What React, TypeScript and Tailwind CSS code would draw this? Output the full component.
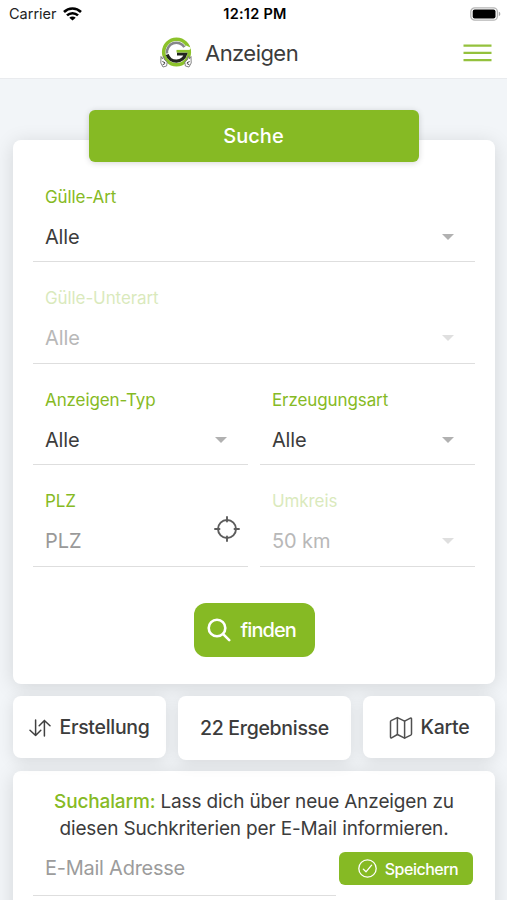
import clsx from "clsx";
import type { ReactNode } from "react";

const Logo = () => (
  <svg width="34" height="34" viewBox="0 0 34 34" fill="none">
    <circle cx="17.5" cy="16" r="12.8" stroke="#8cc22b" strokeWidth="3.6" />
    <path d="M27 9.5l5 2.2-2 3h-5z" fill="#fff" />
    <path d="M8 17.5a9.5 9.5 0 0 1 17.4-6.4" stroke="#85878a" strokeWidth="2.6" />
    <path d="M8.2 18.5A9.6 9.6 0 0 0 26.6 18H18" stroke="#23261f" strokeWidth="3.2" />
    <path d="M17.5 15.2h14.3" stroke="#8cc22b" strokeWidth="2.6" />
    <g stroke="#777" strokeWidth="0.9" fill="#fff">
      <path d="M2 20.5l1.6 2.5 1-2.6 1.2 3.6 2.4 2-.6 4-3.6 1-2.2-4z" />
      <path d="M32 20.5l-1.6 2.5-1-2.6-1.2 3.6-2.4 2 .6 4 3.6 1 2.2-4z" />
    </g>
    <path d="M3.4 25.5l2.6 1.2M3.6 28.8l2.6-1.4M30.6 25.5L28 26.7M30.4 28.8l-2.6-1.4" stroke="#444" strokeWidth="1" />
  </svg>
);

const WifiIcon = () => (
  <svg width="19" height="14" viewBox="0 0 19 14" fill="none" stroke="#000" strokeWidth="2.6">
    <path d="M1 5a12.2 12.2 0 0 1 17 0" />
    <path d="M4 8.4a8 8 0 0 1 11 0" />
    <path d="M9.5 13.6L6.3 10.7a4.6 4.6 0 0 1 6.4 0z" fill="#000" stroke="none" />
  </svg>
);

const BatteryIcon = () => (
  <svg width="31" height="14" viewBox="0 0 31 14">
    <rect x="0.8" y="0.8" width="26.6" height="12.4" rx="4" fill="#fff" stroke="#b5b5b5" strokeWidth="1.3" />
    <rect x="2.7" y="2.6" width="22.8" height="8.8" rx="2" fill="#000" />
    <path d="M28.8 4.8c2 .6 2 3.8 0 4.4z" fill="#a8a8a8" />
  </svg>
);

const MenuIcon = () => (
  <svg width="29" height="18" viewBox="0 0 29 18" stroke="#94c13d" strokeWidth="2.3">
    <path d="M0.5 1.7h28M0.5 8.9h28M0.5 16.1h28" />
  </svg>
);

const LocateIcon = () => (
  <svg width="26" height="26" viewBox="0 0 26 26" fill="none" stroke="#5c5c5c" strokeWidth="1.9" strokeLinecap="round">
    <circle cx="13" cy="13" r="9" />
    <path d="M13 1v4.5M13 20.5V25M1 13h4.5M20.5 13H25" />
  </svg>
);

const SearchIcon = () => (
  <svg width="24" height="24" viewBox="0 0 24 24" fill="none" stroke="#fff" strokeWidth="2.6" strokeLinecap="round">
    <circle cx="10" cy="10" r="8.3" />
    <path d="M16.2 16.2l6 6" />
  </svg>
);

const SortIcon = () => (
  <svg width="22" height="18" viewBox="0 0 22 18" fill="none" stroke="#404040" strokeWidth="1.5" strokeLinecap="round" strokeLinejoin="round">
    <path d="M6.6 1v15.5M1 11.2l5.6 5.3 5.2-5.3" />
    <path d="M15.4 17V1.5M10.2 6.8l5.2-5.3L21 6.8" />
  </svg>
);

const MapIcon = () => (
  <svg width="24" height="24" viewBox="0 0 24 24" fill="none" stroke="#505050" strokeWidth="1.5" strokeLinecap="round" strokeLinejoin="round">
    <path d="M8.4 1.6L2.1 4.7a1 1 0 0 0-.6 1v15.4c0 .7.5 1 1.1.7l5.8-3.3 7.2 3.6 6.2-3a1 1 0 0 0 .7-1V2.8c0-.7-.5-1-1.1-.7l-5.8 3.1z" />
    <path d="M8.4 1.8v16.6M15.6 5.3V22" />
  </svg>
);

const CheckIcon = () => (
  <svg width="19" height="19" viewBox="0 0 19 19" fill="none" stroke="#fff" strokeWidth="1.3" strokeLinecap="round" strokeLinejoin="round">
    <circle cx="9.5" cy="9.5" r="8.7" />
    <path d="M13.6 6.2L8 12.8l-2.7-2.7" />
  </svg>
);

type FieldProps = {
  label: string;
  value: string;
  disabled?: boolean;
  placeholder?: boolean;
  className?: string;
};

const Field = ({ label, value, disabled, placeholder, className }: FieldProps) => (
  <div className={clsx("relative h-[101.4px] border-b border-[#dedede] px-3 pt-6", className)}>
    <div className={clsx("text-[17px] leading-6 tracking-[-0.1px] text-[#86ba24]", disabled && "opacity-30")}>
      {label}
    </div>
    <div className="mt-3.5 flex items-center justify-between">
      <span
        className={clsx(
          "text-[20px] leading-7",
          disabled ? "tracking-[-0.1px] text-[#b8b8b8]" : placeholder ? "text-[#999]" : "tracking-[-0.2px] text-[#3c3c3c]"
        )}
      >
        {value}
      </span>
      {!placeholder && (
        <svg width="12" height="6" viewBox="0 0 12 6" className={clsx("mr-[9px]", disabled && "opacity-40")}>
          <path d="M0 0h12L6 6z" fill="#b1b1b1" />
        </svg>
      )}
    </div>
    {placeholder && (
      <button className="absolute right-2 top-[51px]">
        <LocateIcon />
      </button>
    )}
  </div>
);

const Tile = ({ children, className }: { children: ReactNode; className?: string }) => (
  <button
    className={clsx(
      "flex items-center justify-center rounded-lg bg-white pt-[2px] text-[19.5px] font-medium tracking-[-0.3px] text-[#3c3c3c] shadow-[0_3px_16px_rgba(0,0,0,0.11)]",
      className
    )}
  >
    {children}
  </button>
);

export default function App() {
  return (
    <div className="h-[900px] w-[507px] overflow-hidden bg-[#f2f5f8] font-['Inter',sans-serif] text-[#3c3c3c]">
      <header className="h-[78px] bg-white shadow-[0_1px_0_#e9ebee]">
        <div className="grid h-7 grid-cols-3 items-center pl-[9px] pr-1.5 text-black">
          <div className="flex items-center gap-1.5 text-[14.5px] text-[#222]">
            Carrier
            <WifiIcon />
          </div>
          <div className="text-center text-[14.5px] font-semibold tracking-[0.25px]">12:12 PM</div>
          <div className="flex justify-end">
            <BatteryIcon />
          </div>
        </div>
        <div className="flex h-[50px] items-center pl-[159px] pr-[15px]">
          <Logo />
          <h1 className="ml-3 text-[22px] tracking-[-0.55px]">Anzeigen</h1>
          <button className="ml-auto">
            <MenuIcon />
          </button>
        </div>
      </header>

      <main className="px-[13px] pt-8">
        <button className="relative mx-auto block h-[52px] w-[330px] rounded-md bg-[#86ba24] text-[20px] font-medium text-white shadow-[0_1px_6px_rgba(0,0,0,0.16)]">
          Suche
        </button>

        <section className="-mt-[22px] h-[544px] w-[482px] rounded-lg bg-white px-5 pt-[21px] shadow-[0_3px_20px_rgba(0,0,0,0.13)]">
          <div className="grid grid-cols-2 gap-x-3">
            <Field label="Gülle-Art" value="Alle" className="col-span-2" />
            <Field label="Gülle-Unterart" value="Alle" disabled className="col-span-2" />
            <Field label="Anzeigen-Typ" value="Alle" />
            <Field label="Erzeugungsart" value="Alle" />
            <Field label="PLZ" value="PLZ" placeholder />
            <Field label="Umkreis" value="50 km" disabled />
          </div>
          <button className="mx-auto mt-9 flex h-[54px] w-[121px] items-center gap-2.5 rounded-xl bg-[#86ba24] pl-[13px] pt-px text-[20px] font-medium tracking-[-0.9px] text-white">
            <SearchIcon />
            finden
          </button>
        </section>

        <div className="mt-3 flex w-[482px] items-start justify-between">
          <Tile className="h-[62px] w-[153px] gap-2">
            <SortIcon />
            Erstellung
          </Tile>
          <Tile className="h-[64px] w-[173px]">22 Ergebnisse</Tile>
          <Tile className="h-[62px] w-[132px] gap-2">
            <MapIcon />
            Karte
          </Tile>
        </div>

        <section className="mt-[11px] h-[160px] w-[482px] rounded-lg bg-white px-5 pt-[17px] shadow-[0_3px_20px_rgba(0,0,0,0.13)]">
          <p className="whitespace-nowrap text-center text-[19px] leading-[27px] tracking-[-0.15px]">
            <span className="font-medium text-[#86ba24]">Suchalarm:</span> Lass dich über neue Anzeigen zu
            <br />
            diesen Suchkriterien per E-Mail informieren.
          </p>
          <div className="flex items-start justify-between pr-0.5">
            <div className="h-[54px] w-[303px] border-b border-[#dedede] pl-3 pt-3 text-[20px] leading-7 tracking-[-0.25px] text-[#9c9c9c]">
              E-Mail Adresse
            </div>
            <button className="mt-2.5 flex h-[33px] w-[134px] items-center justify-center gap-2 rounded-md bg-[#86ba24] pl-1 text-[16px] font-medium tracking-[-0.5px] text-white">
              <CheckIcon />
              Speichern
            </button>
          </div>
        </section>
      </main>
    </div>
  );
}
